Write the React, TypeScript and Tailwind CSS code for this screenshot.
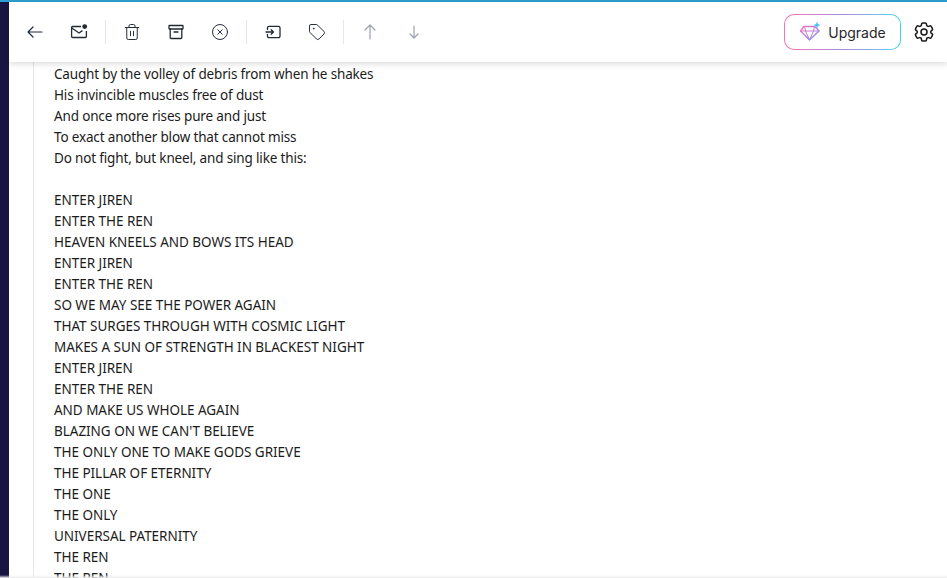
import React from "react";
import { Trash2, CircleX, Tag } from "lucide-react";
import { HiOutlineCog6Tooth } from "react-icons/hi2";

const lines = [
  "Caught by the volley of debris from when he shakes",
  "His invincible muscles free of dust",
  "And once more rises pure and just",
  "To exact another blow that cannot miss",
  "Do not fight, but kneel, and sing like this:",
  "",
  "ENTER JIREN",
  "ENTER THE REN",
  "HEAVEN KNEELS AND BOWS ITS HEAD",
  "ENTER JIREN",
  "ENTER THE REN",
  "SO WE MAY SEE THE POWER AGAIN",
  "THAT SURGES THROUGH WITH COSMIC LIGHT",
  "MAKES A SUN OF STRENGTH IN BLACKEST NIGHT",
  "ENTER JIREN",
  "ENTER THE REN",
  "AND MAKE US WHOLE AGAIN",
  "BLAZING ON WE CAN'T BELIEVE",
  "THE ONLY ONE TO MAKE GODS GRIEVE",
  "THE PILLAR OF ETERNITY",
  "THE ONE",
  "THE ONLY",
  "UNIVERSAL PATERNITY",
  "THE REN",
  "THE REN",
];

function MailDot() {
  return (
    <svg width="18" height="18" viewBox="0 0 18 18" fill="none" stroke="currentColor" strokeWidth="1.3" strokeLinejoin="round">
      <path d="M11 3.500H2.600a1 1 0 0 0-1 1v9a1 1 0 0 0 1 1h12.800a1 1 0 0 0 1-1V8" />
      <path d="M1.800 5l7.200 5 3.400-2.400" />
      <circle cx="14.700" cy="3.600" r="2.400" fill="currentColor" stroke="none" />
    </svg>
  );
}

function ArchiveBox() {
  return (
    <svg width="18" height="18" viewBox="0 0 18 18" fill="none" stroke="currentColor" strokeWidth="1.3" strokeLinejoin="round" strokeLinecap="round">
      <rect x="2" y="2.500" width="14" height="3.500" rx="0.400" />
      <path d="M3.200 6v8.500a1 1 0 0 0 1 1h9.600a1 1 0 0 0 1-1V6" />
      <path d="M7 9h4" />
    </svg>
  );
}

function MoveTo() {
  return (
    <svg width="18" height="18" viewBox="0 0 18 18" fill="none" stroke="currentColor" strokeWidth="1.3" strokeLinejoin="round" strokeLinecap="round">
      <path d="M3.500 6.500V4.800a1.500 1.500 0 0 1 1.500-1.500h9.500a1.500 1.500 0 0 1 1.500 1.500v8.400a1.500 1.500 0 0 1-1.500 1.500H5a1.500 1.500 0 0 1-1.500-1.500v-1.700" />
      <path d="M2 9h7.500M7.200 6.700L9.500 9l-2.300 2.300" />
    </svg>
  );
}

function ArrowBack() {
  return (
    <svg width="18" height="18" viewBox="0 0 18 18" fill="none" stroke="currentColor" strokeWidth="1.200" strokeLinecap="round" strokeLinejoin="round">
      <path d="M2 9h14M7 4L2 9l5 5" />
    </svg>
  );
}

function ArrowNorth() {
  return (
    <svg width="18" height="18" viewBox="0 0 18 18" fill="none" stroke="currentColor" strokeWidth="1.200" strokeLinecap="round" strokeLinejoin="round">
      <path d="M9 2v14M4 7l5-5 5 5" />
    </svg>
  );
}

function ArrowSouth() {
  return (
    <svg width="18" height="18" viewBox="0 0 18 18" fill="none" stroke="currentColor" strokeWidth="1.200" strokeLinecap="round" strokeLinejoin="round">
      <path d="M9 3v12M5 11l4 4 4-4" />
    </svg>
  );
}

function Diamond() {
  return (
    <svg width="22" height="20" viewBox="0 0 22 20" fill="none" strokeWidth="1.3" strokeLinejoin="round">
      <defs>
        <linearGradient id="gem" x1="0" y1="0" x2="1" y2="1">
          <stop offset="0" stopColor="#f472b6" />
          <stop offset="1" stopColor="#818cf8" />
        </linearGradient>
      </defs>
      <path d="M5 4.500h11l4 4.500-9.500 9L1.500 9z" stroke="url(#gem)" />
      <path d="M1.500 9h19M6.500 9l4 9 4-9M5.500 4.500l1 4.500M15.500 4.500l-1 4.500" stroke="url(#gem)" strokeWidth="1" />
      <path d="M18 0.500v5M15.500 3h5" stroke="#38bdf8" strokeWidth="1.400" />
    </svg>
  );
}

function Divider() {
  return <div className="mx-[14px] h-[24px] w-px bg-[#e5e7eb]" />;
}

function IconButton({ children, muted }: { children: React.ReactNode; muted?: boolean }) {
  return (
    <button className={muted ? "flex h-[24px] w-[24px] items-center justify-center text-[#9ca3af]" : "flex h-[24px] w-[24px] items-center justify-center text-[#1f2937]"}>
      {children}
    </button>
  );
}

export default function App() {
  return (
    <div className="relative flex h-[578px] w-[947px] flex-col overflow-hidden bg-white font-['Noto_Sans',sans-serif]">
      <div className="h-[2px] w-full bg-[#2a9fd0]" />
      <div className="flex min-h-0 flex-1">
        <div className="w-[9px] bg-[#1a1443]" />
        <div className="flex min-w-0 flex-1 flex-col">
          <header className="relative z-10 flex h-[60px] shrink-0 items-center bg-white pl-[14px] pr-[11px] shadow-[0_2px_6px_rgba(0,0,0,0.14)]">
            <IconButton>
              <ArrowBack />
            </IconButton>
            <div className="ml-[20px]">
              <IconButton>
                <MailDot />
              </IconButton>
            </div>
            <Divider />
            <IconButton>
              <Trash2 size={18} strokeWidth={1.3} />
            </IconButton>
            <div className="ml-[20px]">
              <IconButton>
                <ArchiveBox />
              </IconButton>
            </div>
            <div className="ml-[20px]">
              <IconButton>
                <CircleX size={18} strokeWidth={1.3} />
              </IconButton>
            </div>
            <Divider />
            <IconButton>
              <MoveTo />
            </IconButton>
            <div className="ml-[20px]">
              <IconButton>
                <Tag size={18} strokeWidth={1.3} />
              </IconButton>
            </div>
            <Divider />
            <IconButton muted>
              <ArrowNorth />
            </IconButton>
            <div className="ml-[20px]">
              <IconButton muted>
                <ArrowSouth />
              </IconButton>
            </div>
            <div className="ml-auto flex items-center gap-[11px]">
              <div className="h-[36px] w-[117px] rounded-[10px] bg-gradient-to-r from-[#f472b6] via-[#a78bdb] to-[#38d6f8] p-px">
                <div className="flex h-full w-full items-center justify-center gap-[7px] rounded-[9px] bg-white">
                  <Diamond />
                  <span className="font-['Inter',sans-serif] text-[14px] text-[#27272a]">Upgrade</span>
                </div>
              </div>
              <HiOutlineCog6Tooth size={24} className="text-[#18181b]" />
            </div>
          </header>
          <main className="min-h-0 flex-1 overflow-hidden">
            <div className="ml-[24px] border-l border-[#e5e7eb] pl-[20px] pt-[2px] text-[13.5px] leading-[21px] text-[#1b1b1b]">
              {lines.map((line, i) => (
                <div key={i} className={i < 5 ? "h-[21px] whitespace-nowrap tracking-[-0.16px]" : "h-[21px] whitespace-nowrap tracking-[-0.03px]"}>
                  {line}
                </div>
              ))}
            </div>
          </main>
        </div>
      </div>
      <div className="absolute inset-x-0 bottom-0 h-[3px] bg-gradient-to-b from-transparent to-[#ececec]" />
    </div>
  );
}
